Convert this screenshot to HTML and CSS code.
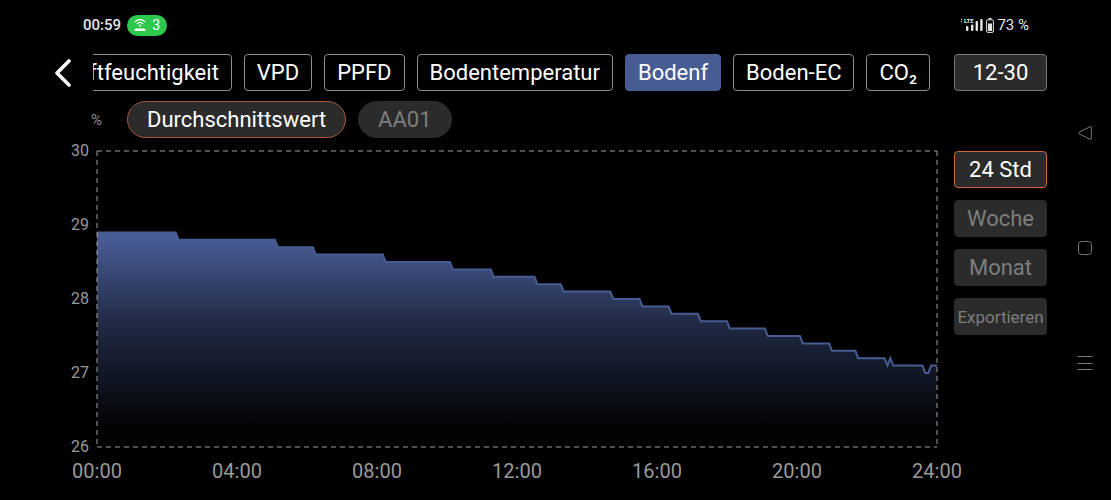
FILE: index.html
```html
<!DOCTYPE html>
<html lang="de">
<head>
    <meta charset="UTF-8" />
    <meta name="viewport" content="width=device-width, initial-scale=1" />
    <title>Bodenfeuchtigkeit</title>
    <link rel="stylesheet" href="styles.css">
</head>
<body>
    <div class="screen">
        <div class="app">

            <header class="statusbar">
                <span class="clock">00:59</span>
                <span class="hotspot">
                    <svg width="12" height="14" viewBox="0 0 12 14" fill="none" stroke="#fff" stroke-linecap="round">
                        <path d="M1.2 3.6C3.8 1 8.2 1 10.8 3.6" stroke-width="1.2" />
                        <path d="M3.2 5.7C4.8 4.2 7.2 4.2 8.8 5.7" stroke-width="1.2" />
                        <circle cx="6" cy="7.6" r="1.1" fill="#fff" stroke="none" />
                        <path d="M0.5 13V12Q0.5 10.4 2 10.4H10Q11.5 10.4 11.5 12V13Z" fill="#fff" stroke="none" />
                    </svg>
                    3
                </span>
                <span class="phone">
                    <svg class="signal" width="22" height="14" viewBox="0 0 22 14" fill="#e6e6e6">
                        <text x="3" y="5" class="lte">LTE</text>
                        <rect x="0" y="1" width="1" height="1" />
                        <rect x="0" y="3" width="1" height="1" />
                        <rect x="5" y="8" width="2.4" height="5" rx="1" />
                        <rect x="10" y="6.5" width="2.4" height="6.5" rx="1" />
                        <rect x="14.6" y="3" width="2.4" height="10" rx="1" />
                        <rect x="19.2" y="1" width="2.4" height="12" rx="1" />
                    </svg>
                    <svg width="8" height="15" viewBox="0 0 8 15">
                        <rect x="2.5" y="0" width="3" height="1.2" fill="#e6e6e6" />
                        <rect x="0.6" y="1.8" width="6.8" height="12.6" rx="1.4" fill="none" stroke="#e6e6e6" stroke-width="1" />
                        <rect x="2" y="5.5" width="4" height="7.5" fill="#e6e6e6" />
                    </svg>
                    73 %
                </span>
            </header>

            <div class="toolbar">
                <button type="button" class="back" aria-label="Zurück">
                    <svg width="18" height="28" viewBox="0 0 18 28" fill="none" stroke="#fff" stroke-width="3.6" stroke-linecap="round" stroke-linejoin="round">
                        <path d="M15 2L3 14L15 26" />
                    </svg>
                </button>
                <nav class="tabs">
                    <button type="button" class="tab">Luftfeuchtigkeit</button>
                    <button type="button" class="tab">VPD</button>
                    <button type="button" class="tab">PPFD</button>
                    <button type="button" class="tab">Bodentemperatur</button>
                    <button type="button" class="tab active">Bodenf</button>
                    <button type="button" class="tab">Boden-EC</button>
                    <button type="button" class="tab">CO₂</button>
                </nav>
                <button type="button" class="side-btn date">12-30</button>
            </div>

            <div class="sensors">
                <span class="unit">%</span>
                <button type="button" class="pill active">Durchschnittswert</button>
                <button type="button" class="pill">AA01</button>
            </div>

            <main class="content">
                <div class="chart">
                    <div class="y-axis">
                        <span>30</span>
                        <span>29</span>
                        <span>28</span>
                        <span>27</span>
                        <span>26</span>
                    </div>
                    <div class="plot">
                        <!-- x: 5 minute samples, y: tenths below 30 % -->
                        <svg class="series" viewBox="0 0 288 40" preserveAspectRatio="none">
                            <defs>
                                <linearGradient id="fill" gradientUnits="userSpaceOnUse" x1="0" y1="11" x2="0" y2="40">
                                    <stop offset="0" stop-color="#4b5f9a" />
                                    <stop offset="0.45" stop-color="#1e273f" />
                                    <stop offset="0.95" stop-color="#000" />
                                </linearGradient>
                            </defs>
                            <path class="area" d="M0 11H27L28 12H61L62 13H74L75 14H98L99 15H121L122 16H135L136 17H150L151 18H159L160 19H176L177 20H186L187 21H196L197 22H206L207 23H216L217 24H229L230 25H241L242 26H251L252 27H260L261 28H270L271 29L272 28L273 29H283L284 30H285L286 29H288V40H0Z" />
                            <path class="line" d="M0 11H27L28 12H61L62 13H74L75 14H98L99 15H121L122 16H135L136 17H150L151 18H159L160 19H176L177 20H186L187 21H196L197 22H206L207 23H216L217 24H229L230 25H241L242 26H251L252 27H260L261 28H270L271 29L272 28L273 29H283L284 30H285L286 29H288" />
                            <path class="frame" d="M0 0H288" />
                            <path class="frame" d="M0 40H288" />
                            <path class="frame" d="M0 0V40" />
                            <path class="frame" d="M288 0V40" />
                        </svg>
                    </div>
                    <div class="x-axis">
                        <span>00:00</span>
                        <span>04:00</span>
                        <span>08:00</span>
                        <span>12:00</span>
                        <span>16:00</span>
                        <span>20:00</span>
                        <span>24:00</span>
                    </div>
                </div>

                <div class="ranges">
                    <button type="button" class="side-btn active">24 Std</button>
                    <button type="button" class="side-btn">Woche</button>
                    <button type="button" class="side-btn">Monat</button>
                    <button type="button" class="side-btn export">Exportieren</button>
                </div>
            </main>
        </div>

        <nav class="system-nav">
            <button type="button" aria-label="Zurück">
                <svg width="16" height="16" viewBox="0 0 16 16"><path d="M14.3 2.2V13.8Q14.3 15 13.2 14.4L2 8.7Q0.8 8 2 7.3L13.2 1.6Q14.3 1 14.3 2.2Z" /></svg>
            </button>
            <button type="button" aria-label="Startbildschirm">
                <svg width="16" height="16" viewBox="0 0 16 16"><rect x="1.5" y="1.5" width="13" height="13" rx="3" /></svg>
            </button>
            <button type="button" aria-label="Letzte Apps">
                <svg width="16" height="16" viewBox="0 0 16 16"><path d="M0.5 1.5H15.5M0.5 8.5H15.5M0.5 14.5H15.5" /></svg>
            </button>
        </nav>
    </div>
</body>
</html>
```
FILE: styles.css
```css
* {
    box-sizing: border-box;
}
body {
    margin: 0;
    background: #000;
    color: #fff;
    font-family: Roboto, sans-serif;
}
button {
    padding: 0;
    border: none;
    background: none;
    color: inherit;
    font-family: inherit;
    cursor: pointer;
}
svg {
    display: block;
}
.screen {
    display: flex;
    min-height: 100vh;
}
.app {
    flex: 1;
    min-width: 0;
    display: flex;
    flex-direction: column;
    padding: 0 12px 0 54px;
}

/* status bar */
.statusbar {
    display: flex;
    align-items: center;
    height: 50px;
    margin-bottom: 4px;
    padding: 0 18px 0 29px;
    font-size: 15px;
    color: #e6e6e6;
}
.clock {
    font-weight: 500;
}
.hotspot {
    display: flex;
    align-items: center;
    justify-content: center;
    gap: 6px;
    width: 40px;
    height: 21px;
    margin-left: 6px;
    border-radius: 11px;
    background: #2dc84d;
    font-size: 14px;
    color: #fff;
}
.phone {
    display: flex;
    align-items: center;
    gap: 3px;
    margin-left: auto;
}
.lte {
    font-size: 6px;
    font-weight: 700;
}

/* tabs */
.toolbar {
    display: flex;
    align-items: center;
}
.back {
    flex: none;
    width: 39px;
}
.tabs {
    flex: 1;
    min-width: 0;
    display: flex;
    justify-content: flex-end;
    gap: 12px;
    margin-right: 24px;
    overflow: hidden;
}
.tab {
    flex: none;
    height: 37px;
    padding: 0 12px;
    border: 1px solid #8c8c8c;
    border-radius: 4px;
    font-size: 22px;
}
.tab.active {
    border-color: #475c92;
    background: #475c92;
}

/* sensor selection */
.sensors {
    display: flex;
    align-items: center;
    gap: 12px;
    margin: 10px 0 13px 37px;
}
.unit {
    width: 24px;
    font-size: 15px;
    color: #8c8c8c;
}
.pill {
    height: 37px;
    padding: 0 19px;
    border: 1px solid #2b2b2b;
    border-radius: 19px;
    background: #2b2b2b;
    font-size: 22px;
    color: #7d7d7d;
}
.pill.active {
    border-color: #a8583c;
    color: #fff;
}

/* chart */
.content {
    flex: 1;
    display: flex;
    gap: 17px;
}
.chart {
    flex: 1;
    display: grid;
    grid-template-columns: 43px 1fr;
    grid-template-rows: 1fr 53px;
}
.y-axis {
    display: flex;
    flex-direction: column;
    justify-content: space-between;
    margin: -10px 0;
    padding-right: 8px;
    font-size: 16px;
    line-height: 20px;
    text-align: right;
    color: #999;
}
.plot {
    position: relative;
    min-height: 200px;
}
.series {
    position: absolute;
    width: 100%;
    height: 100%;
    overflow: visible;
}
.series path {
    vector-effect: non-scaling-stroke;
}
.area {
    fill: url(#fill);
}
.line {
    fill: none;
    stroke: #475c92;
    stroke-width: 2px;
}
.frame {
    fill: none;
    stroke: #a0a0a0;
    stroke-width: 1px;
    stroke-dasharray: 5 4;
}
.x-axis {
    grid-column: 2;
    display: flex;
    justify-content: space-between;
    margin: 0 -30px;
    font-size: 20px;
    line-height: 48px;
    color: #999;
}
.x-axis span {
    width: 60px;
    text-align: center;
}

/* right column */
.ranges {
    display: flex;
    flex-direction: column;
    gap: 12px;
}
.side-btn {
    flex: none;
    width: 93px;
    height: 37px;
    border: 1px solid #2b2b2b;
    border-radius: 4px;
    background: #2b2b2b;
    font-size: 22px;
    color: #7d7d7d;
}
.side-btn.date {
    border-color: #777;
    color: #fff;
}
.side-btn.active {
    border-color: #d2663a;
    color: #fff;
}
.side-btn.export {
    font-size: 17px;
}

/* android navigation */
.system-nav {
    flex: none;
    display: flex;
    flex-direction: column;
    align-items: center;
    justify-content: center;
    gap: 99px;
    width: 52px;
    padding-bottom: 4px;
}
.system-nav svg {
    fill: none;
    stroke: #777;
    stroke-width: 1px;
}
```
